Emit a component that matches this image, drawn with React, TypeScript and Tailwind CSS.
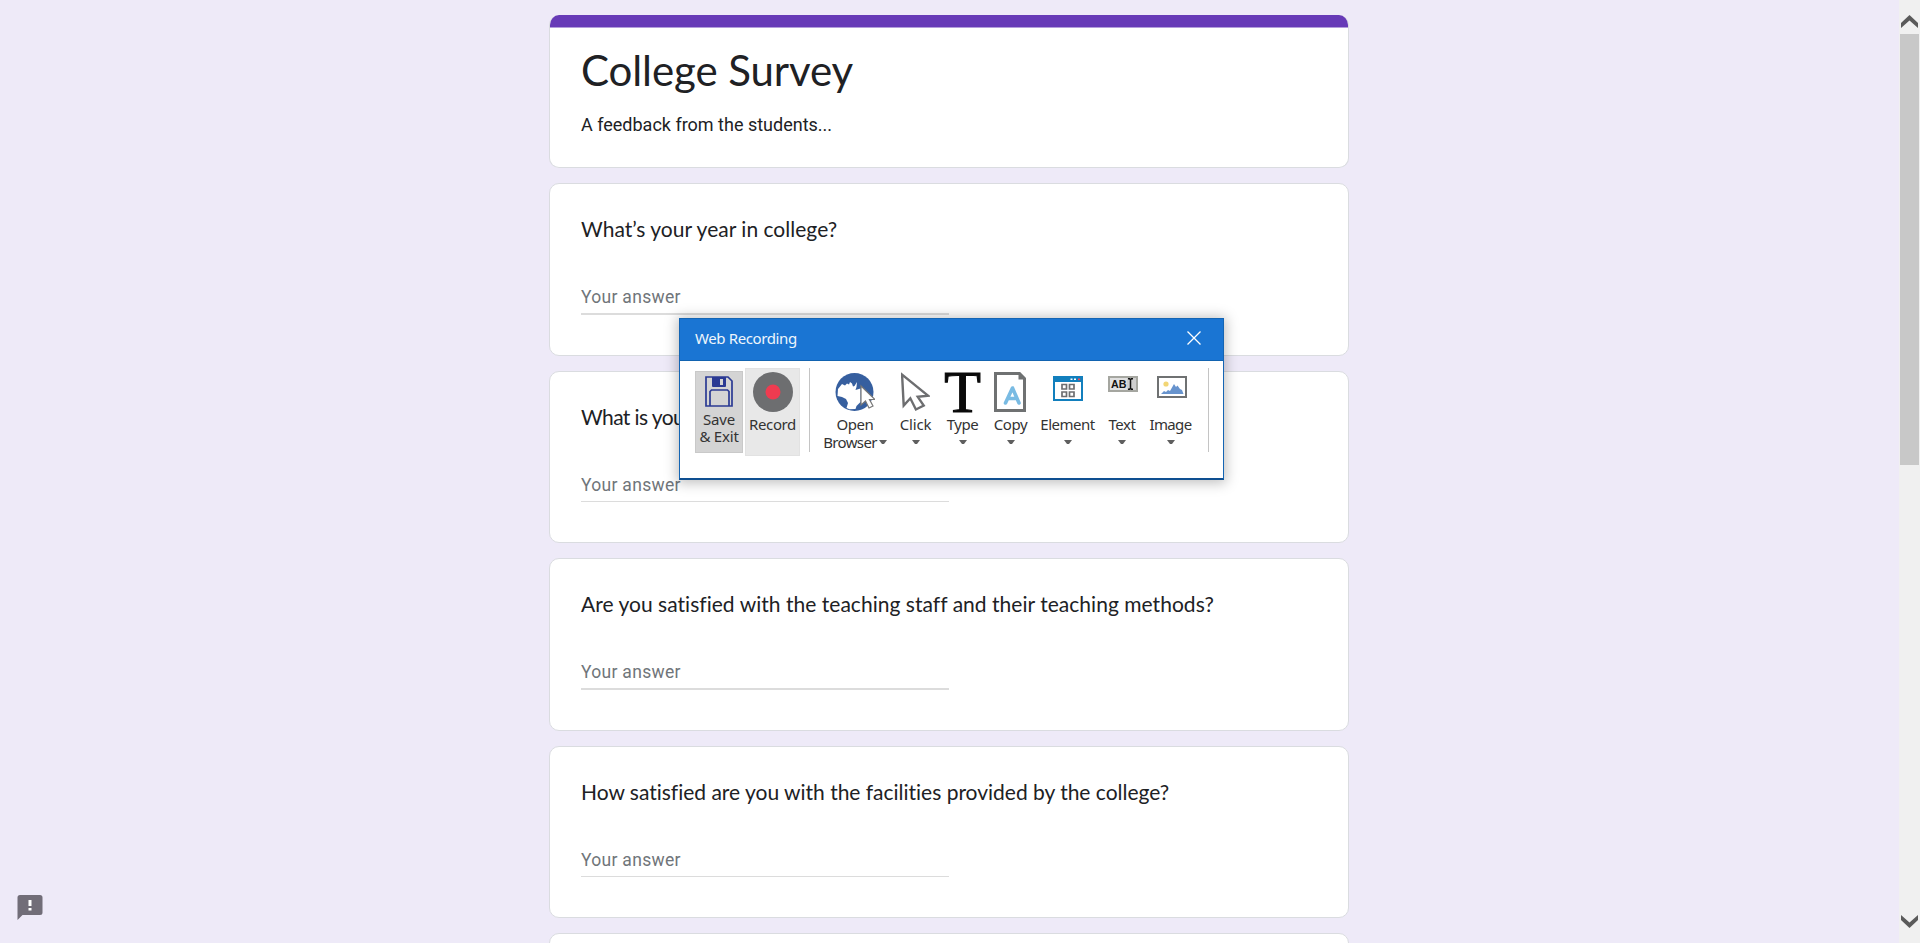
import type { ReactNode } from "react";

const questions = [
  { text: "What’s your year in college?", line: "h-[2px]", spacing: "tracking-[0.02px]" },
  { text: "What is your", line: "h-px", spacing: "tracking-[-0.6px]" },
  { text: "Are you satisfied with the teaching staff and their teaching methods?", line: "h-[2px]", spacing: "tracking-[0.03px]" },
  { text: "How satisfied are you with the facilities provided by the college?", line: "h-px", spacing: "tracking-[-0.01px]" },
];

function QuestionCard({ text, line, spacing }: { text: string; line: string; spacing: string }) {
  return (
    <section className="h-[172.5px] shrink-0 rounded-[10px] border border-[#dadce0] bg-white px-[31px] pt-[29px]">
      <h2 className={`h-[30px] whitespace-nowrap font-['Lato',sans-serif] text-[21px] leading-[32px] text-[#202124] ${spacing}`}>{text}</h2>
      <div className="mt-[40px] h-[29px] w-[368px] text-[17.5px] leading-[28px] tracking-[0.3px] text-[#70757a]">Your answer</div>
      <div className={`mt-px w-[368px] bg-[#dcdcdc] ${line}`} />
    </section>
  );
}

function Caret() {
  return (
    <svg className="block shrink-0" width="8" height="5" viewBox="0 0 8 5">
      <path d="M0 0h8L5 4H3z" fill="#5f5f5f" />
    </svg>
  );
}

function Tool({ width, label, icon, spacing }: { width: string; label: string; icon: ReactNode; spacing: string }) {
  return (
    <div className={`flex shrink-0 flex-col items-center ${width}`}>
      <div className="flex h-[43px] items-start justify-center">{icon}</div>
      <div className={`h-[19px] whitespace-nowrap leading-[18px] ${spacing}`}>{label}</div>
      <div className="mt-[6px]">
        <Caret />
      </div>
    </div>
  );
}

function SaveIcon() {
  return (
    <svg width="28" height="31" viewBox="0 0 28 31" fill="none" stroke="#2b3a93" strokeWidth="1.7">
      <path d="M1 1h22l4 4v25H1z" />
      <path d="M5 30V15.500l1.500-1.500h16l1.500 1.500V30" />
      <path d="M8 1h12v9H8z" fill="#2b3a93" stroke="none" />
      <path d="M15 3h3v6h-3z" fill="#d4d4d4" stroke="none" />
      <path d="M7.500 1v9.500h13V1" strokeWidth="1" />
    </svg>
  );
}

function GlobeIcon() {
  return (
    <svg width="40" height="40" viewBox="0 0 40 40">
      <circle cx="19.500" cy="20" r="19" fill="#365f9f" />
      <path d="M3 17l4-5 3 1.500 2-2 2 1 1-2.500 2 1.500 1 3 1.500-.500 2.500-4-.500 5-1 3 5-1.500V30l-4 4-1 3-6 .300-3-1.300 1.500-5-2-4L7 25l-4.500-1z" fill="#fff" />
      <path d="M26 14v19l4.500-4 3.500 7 4-2-3.500-6.500h5.500z" fill="#fff" stroke="#777" strokeWidth="1.200" />
    </svg>
  );
}

function PointerIcon() {
  return (
    <svg width="29" height="40" viewBox="0 0 29 40">
      <path d="M2 2v31l7-7 5 11.500 8-3.500-5.500-9 10.500-.500z" transform="rotate(-3 14 20)" fill="#fff" stroke="#6d6e70" strokeWidth="2.400" />
    </svg>
  );
}

function TypeIcon() {
  return (
    <svg className="overflow-visible" width="38" height="41" viewBox="0 0 38 41">
      <text x="18.500" y="40" textAnchor="middle" fontFamily="Liberation Serif, serif" fontSize="60" fill="#0a0a0a" stroke="#0a0a0a" strokeWidth="1.200">T</text>
    </svg>
  );
}

function CopyIcon() {
  return (
    <svg className="mr-[2px]" width="32" height="40" viewBox="0 0 32 40">
      <path d="M1.500 1.500h24l5 5v32h-29z" fill="#fff" stroke="#6f7172" strokeWidth="3" />
      <path d="M24.500 0L32 7.500h-7.500z" fill="#6f7172" />
      <path d="M11.500 31l7-15 6.500 15M14 26.500h9" fill="none" stroke="#79bbe3" strokeWidth="3.600" strokeLinejoin="round" strokeLinecap="round" />
    </svg>
  );
}

function ElementIcon() {
  return (
    <svg className="mt-[4px]" width="30" height="25" viewBox="0 0 30 25">
      <path d="M1 1h28v23H1z" fill="#fff" stroke="#127fbd" strokeWidth="2" />
      <path d="M0 0h30v6H0z" fill="#127fbd" />
      <path d="M17.500 2.500h2v1.500h-2zM21 2.500h2v1.500h-2z" fill="#fff" />
      <path d="M25 2.500h2.200v1.700H25z" fill="#f04a56" />
      <path d="M9 8.500h4.500v4.500H9zM16.500 8.500H21v4.500h-4.500zM9 16h4.500v4.500H9zM16.500 16H21v4.500h-4.500z" fill="#fff" stroke="#6d6e70" strokeWidth="1.700" />
    </svg>
  );
}

function TextIcon() {
  return (
    <svg className="ml-[2px] mt-[4px]" width="30" height="16" viewBox="0 0 30 16">
      <path d="M1 1h28v14H1z" fill="#e0e0e0" stroke="#a5a6a0" strokeWidth="2" />
      <path d="M19 2h9v12h-9z" fill="#cfcfcf" />
      <text x="3" y="12" fontFamily="Liberation Sans, sans-serif" fontSize="11.500" fontWeight="700" textLength="15.500" lengthAdjust="spacingAndGlyphs" fill="#111">AB</text>
      <path d="M20 2.800h1.500l1 1 1-1H25M22.500 3.500v9M20 13.200h1.500l1-1 1 1H25" fill="none" stroke="#111" strokeWidth="1.500" />
    </svg>
  );
}

function ImageIcon() {
  return (
    <svg className="ml-[2px] mt-[4px]" width="30" height="22" viewBox="0 0 30 22">
      <path d="M1 1h28v20H1z" fill="#fff" stroke="#6f7172" strokeWidth="2" />
      <circle cx="9" cy="8" r="2.600" fill="#f2d675" />
      <path d="M4 18l3-3 2 1 2-2 2 1 4-7 2 3 1.500-1.500L23 13l2 1 1.500 4z" fill="#6793cd" />
    </svg>
  );
}

function RecordingDialog() {
  return (
    <div className="absolute left-[679px] top-[318px] flex h-[162px] w-[545px] flex-col border border-b-2 border-[#1465b4] border-b-[#0e4f91] bg-white font-['Noto_Sans','Open_Sans',sans-serif] text-[15px] text-[#333] shadow-[0_1px_12px_2px_rgba(0,0,0,0.25)]">
      <div className="flex h-[42px] shrink-0 items-center justify-between border-b border-[#1263b0] bg-[#1a75d3] pb-[3px] pl-[15px] pr-[22px]">
        <span className="whitespace-nowrap leading-[20px] tracking-[-0.38px] text-[#eef5fc]">Web Recording</span>
        <svg width="14" height="14" viewBox="0 0 14 14" stroke="#fff" strokeWidth="1.300">
          <path d="M.500.500l13 13M13.500.500l-13 13" />
        </svg>
      </div>
      <div className="flex items-start pl-[15px] pt-[7px]">
        <div className="mt-[3px] flex h-[82px] w-[48px] shrink-0 flex-col items-center border border-[#c9c9c9] bg-[#d4d4d4] pt-[4px]">
          <SaveIcon />
          <div className="mt-[4px] text-center leading-[17px] tracking-[-0.2px]">
            <div>Save</div>
            <div className="whitespace-nowrap">&amp; Exit</div>
          </div>
        </div>
        <div className="ml-[2px] flex h-[88px] w-[55px] shrink-0 flex-col items-center border border-[#e2e2e2] bg-[#e8e8e8] pt-[3px]">
          <svg width="40" height="40" viewBox="0 0 40 40">
            <circle cx="20" cy="20" r="20" fill="#6d6e70" />
            <circle cx="20" cy="20" r="7.500" fill="#ef3b50" />
          </svg>
          <div className="mt-[3px] leading-[18px] tracking-[-0.4px]">Record</div>
        </div>
        <div className="ml-[9px] h-[84px] w-px shrink-0 bg-[#c4c4c4]" />
        <div className="ml-[10px] flex pt-[4px]">
          <div className="flex w-[70px] shrink-0 flex-col items-center">
            <div className="h-[43px]">
              <GlobeIcon />
            </div>
            <div className="h-[18px] leading-[18px] tracking-[-0.45px]">Open</div>
            <div className="flex items-center gap-[2px] leading-[18px] tracking-[-0.65px]">
              Browser
              <Caret />
            </div>
          </div>
          <div className="w-[2px]" />
          <Tool width="w-[47px]" label="Click" icon={<PointerIcon />} spacing="tracking-[-0.2px]" />
          <Tool width="w-[47px]" label="Type" icon={<TypeIcon />} spacing="tracking-[-0.5px]" />
          <Tool width="w-[49px]" label="Copy" icon={<CopyIcon />} spacing="tracking-[-0.4px]" />
          <Tool width="w-[65px]" label="Element" icon={<ElementIcon />} spacing="tracking-[-0.5px]" />
          <Tool width="w-[44px]" label="Text" icon={<TextIcon />} spacing="tracking-[-0.4px]" />
          <Tool width="w-[53px]" label="Image" icon={<ImageIcon />} spacing="tracking-[-0.65px]" />
        </div>
        <div className="ml-[11px] h-[84px] w-px shrink-0 bg-[#c4c4c4]" />
      </div>
    </div>
  );
}

export default function App() {
  return (
    <div className="relative flex h-[943px] w-[1920px] overflow-hidden bg-[#eeeaf8] font-['Roboto',sans-serif]">
      <main className="flex flex-1 justify-center overflow-hidden pr-px pt-[15px]">
        <div className="flex w-[800px] shrink-0 flex-col gap-[15px]">
          <header className="h-[153.3px] shrink-0 overflow-hidden rounded-[10px] border border-t-0 border-[#dadce0] bg-white">
            <div className="-mx-px h-[13px] border-b border-[#b39ddb] bg-[#673ab7]" />
            <div className="px-[31px] pt-[17px]">
              <h1 className="h-[50px] whitespace-nowrap font-['Lato',sans-serif] text-[42px] leading-[50px] tracking-[-0.08px] text-[#202124]">College Survey</h1>
              <p className="mt-[17px] text-[18px] leading-[26px] text-[#202124]">A feedback from the students...</p>
            </div>
          </header>
          {questions.map((q) => (
            <QuestionCard key={q.text} {...q} />
          ))}
          <section className="h-[172.5px] shrink-0 rounded-[10px] border border-[#dadce0] bg-white" />
        </div>
      </main>

      <aside className="flex w-[21px] shrink-0 flex-col bg-[#f0f0f0]">
        <div className="flex h-[34px] shrink-0 items-end pb-[6px] pl-[2px]">
          <svg width="17" height="13" viewBox="0 0 17 13" fill="#5a5a5a">
            <path d="M0 8L8.500 0 17 8v5L8.500 5.500 0 13z" />
          </svg>
        </div>
        <div className="ml-px h-[431px] w-[19px] shrink-0 bg-[#c8c8c8]" />
        <div className="flex flex-1 items-end pb-[15px] pl-[2px]">
          <svg width="17" height="13" viewBox="0 0 17 13" fill="#5a5a5a">
            <path d="M0 5l8.500 8L17 5V0L8.500 7.500 0 0z" />
          </svg>
        </div>
      </aside>

      <svg className="absolute left-[17px] top-[895px]" width="26" height="25" viewBox="0 0 26 25">
        <path d="M3 0h20a2.500 2.500 0 0 1 2.500 2.500v15A2.500 2.500 0 0 1 23 20H5.500L.500 25V2.500A2.500 2.500 0 0 1 3 0z" fill="#716d78" />
        <path d="M11.500 5h3v6h-3zM11.500 13h3v2.600h-3z" fill="#fff" />
      </svg>

      <RecordingDialog />
    </div>
  );
}
